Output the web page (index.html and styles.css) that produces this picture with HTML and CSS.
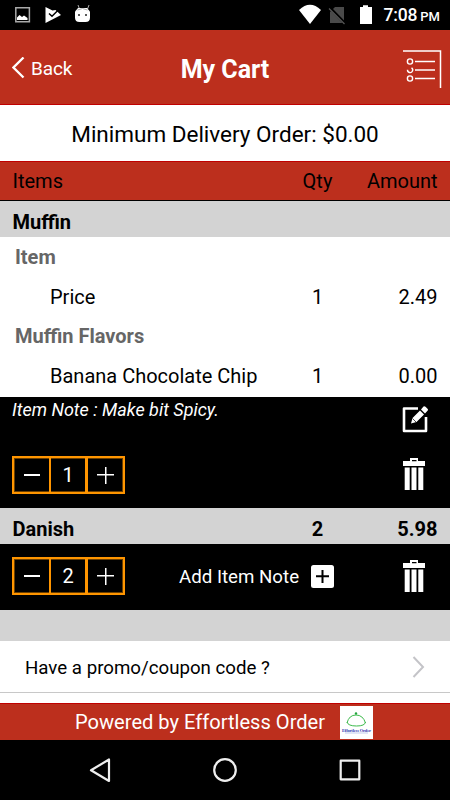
FILE: index.html
```html
<!DOCTYPE html>
<html lang="en">
<head>
<meta charset="utf-8">
<title>My Cart</title>
<link rel="stylesheet" href="styles.css">
</head>
<body>
<svg class="defs" width="0" height="0">
  <symbol id="trash" viewBox="0 0 22 32">
    <path fill="#fff" d="M0 3h7V0h8v3h7v5H0zM9 2v1.200h4.500V2zM1.700 9.500h5V32h-5zM8.500 9.500h5V32h-5zM15.300 9.500h5V32h-5z" fill-rule="evenodd"/>
  </symbol>
</svg>
<div class="screen">
  <div class="status">
    <svg class="left-icons" width="80" height="30" viewBox="0 0 80 30">
      <path d="M.8 7.800h13.600v14H.8z" fill="none" stroke="#aaa" stroke-width="1.500"/>
      <path d="M2 20v-2.500l2.500-2.500 2.500 2 2-1.500 3.500 2.500v2z" fill="#fff"/>
      <path d="M30.500 7l7 3.500 3-.5 5.500 5-15.500 8z" fill="#fff"/>
      <path d="M34 13.500l3 2.800 6.500-6.500" fill="none" stroke="#000" stroke-width="1.500"/>
      <path d="M63 5l1.500 4M74 5l-1.500 4" stroke="#aaa" stroke-width="1"/>
      <path d="M63 8h9l3 3.500v6q0 4.500-4.500 4.500h-6q-4.500 0-4.500-4.500v-6z" fill="#fff"/>
      <path d="M62.500 10q5-3 10 0" stroke="#aaa" fill="none"/>
      <circle cx="64" cy="15" r="1" fill="#222"/><circle cx="71" cy="15" r="1" fill="#222"/>
    </svg>
    <svg class="right-icons" width="76" height="30" viewBox="0 0 76 30">
      <path d="M0 10Q11-.5 22 10L11 24z" fill="#fff"/>
      <path d="M36 7h9v16H31V12z" fill="#4a4a4a"/>
      <path d="M31 8l15 15.500" stroke="#000" stroke-width="3"/>
      <path d="M30 8.500l15.500 15.500" stroke="#555" stroke-width="1.300"/>
      <path d="M61 7h3V5.300h5V7h4v17H61z" fill="#fff"/>
    </svg>
    <span class="clock">7:08 <small>PM</small></span>
  </div>
  <header class="header">
    <div class="back">
      <svg width="13" height="23" viewBox="0 0 13 23"><path d="M11.500 .5L1.500 10.500l10 10" fill="none" stroke="#fff" stroke-width="2.300"/></svg>
      <span>Back</span>
    </div>
    <h1>My Cart</h1>
    <svg class="list" width="39" height="40" viewBox="0 0 39 40">
      <g fill="none" stroke="#fff">
        <path d="M0 2h37.500v37" stroke-width="1.500"/>
        <circle cx="7" cy="12.500" r="2.600" stroke-width="1.400"/><path d="M8.500 18.800a2.600 2.600 0 1 1-4 2" stroke-width="1.400"/>
        <circle cx="7" cy="29.500" r="2.600" stroke-width="1.400"/>
        <path d="M12 12.500h20M12 21h20M12 29.500h20" stroke-width="1.500"/>
      </g>
    </svg>
  </header>
  <div class="minimum"><span>Minimum Delivery Order: $0.00</span></div>
  <div class="row columns"><span>Items</span><span class="qty">Qty</span><span class="amount">Amount</span></div>
  <div class="row product"><span>Muffin</span></div>
  <div class="options">
    <div class="group">Item</div>
    <div class="row option"><span>Price</span><span class="qty">1</span><span class="amount">2.49</span></div>
    <div class="group">Muffin Flavors</div>
    <div class="row option"><span>Banana Chocolate Chip</span><span class="qty">1</span><span class="amount">0.00</span></div>
  </div>
  <div class="controls noted">
    <div class="note">
      <em>Item Note : Make bit Spicy.</em>
      <svg class="edit" width="27" height="27" viewBox="0 0 27 27">
        <path d="M16 2.500H2v22.500h22V11" fill="none" stroke="#fff" stroke-width="2.600" stroke-linejoin="round"/>
        <path d="M9 17.500l1.500-5.500L18 4.500l4 4-7.500 7.500zM19 3.500L21.500.5q1-.7 2 .3l2 2q1 1 0 2L23 7.500z" fill="#fff"/>
        <path d="M10.500 12.500l3.500 3.500" stroke="#000" stroke-width=".7"/>
      </svg>
    </div>
    <div class="actions">
      <div class="stepper"><i class="minus"></i><b>1</b><i class="plus"></i></div>
      <svg class="trash" width="22" height="32"><use href="#trash"/></svg>
    </div>
  </div>
  <div class="row product"><span>Danish</span><span class="qty">2</span><span class="amount">5.98</span></div>
  <div class="controls short">
    <div class="actions">
      <div class="stepper"><i class="minus"></i><b>2</b><i class="plus"></i></div>
      <div class="add"><span>Add Item Note</span>
        <svg width="23" height="23" viewBox="0 0 23 23"><rect width="23" height="23" rx="2.500" fill="#fff"/><path d="M5 11.300h13M11.500 5v13" stroke="#000" stroke-width="2"/></svg>
      </div>
      <svg class="trash" width="22" height="32"><use href="#trash"/></svg>
    </div>
  </div>
  <div class="spacer"></div>
  <div class="promo"><span>Have a promo/coupon code ?</span>
    <svg width="13" height="22" viewBox="0 0 13 22"><path d="M1.500 1l9.500 10-9.500 10" fill="none" stroke="#c4c4c8" stroke-width="2"/></svg>
  </div>
  <footer class="powered"><span>Powered by Effortless Order</span>
    <svg width="33" height="33" viewBox="0 0 33 33">
      <path fill="#fff" d="M0 0h33v33H0z"/>
      <path d="M7 17Q9 9 16 9t9.500 8M7 16q1 4 9.500 4t9-4" fill="none" stroke="#3cba4b" stroke-width="1"/>
      <circle cx="16" cy="7.500" r="1.200" fill="#20a33a"/>
      <text x="16.500" y="25.500" text-anchor="middle" textLength="29" class="brand">Effortless Order</text>
      <path d="M5 27h23" stroke="#a9b8e4" stroke-width=".7"/>
    </svg>
  </footer>
  <nav class="nav">
    <svg width="450" height="60" viewBox="0 0 450 60" fill="none" stroke="#eee" stroke-width="2.200" stroke-linejoin="round">
      <path d="M91 30.300L109 19.500v21.500z"/><circle cx="225" cy="30" r="10.800"/><rect x="340.700" y="20.700" width="18.600" height="18.600"/>
    </svg>
  </nav>
</div>
</body>
</html>
```
FILE: styles.css
```css
* { box-sizing: border-box; }
body { margin: 0; background: #000; font-family: Roboto, "Liberation Sans", sans-serif; font-size: 20px; line-height: 24px; color: #000; }
svg { display: block; flex: none; }
.defs { position: absolute; }
.screen { width: 450px; height: 800px; display: flex; flex-direction: column; overflow: hidden; white-space: nowrap; }
.screen > * { flex: none; }
.status { height: 30px; background: #000; display: flex; align-items: center; padding: 0 10px 0 15px; color: #fff; }
.right-icons { margin-left: 204px; }
.clock { margin-left: auto; font-size: 17.5px; font-weight: 500; padding-top: 2px; letter-spacing: -.2px; }
.clock small { font-size: 13px; margin-left: -1px; letter-spacing: 0; }
.header { height: 75px; background: #bc2f1d; border-bottom: 1px solid #c00000; color: #fff; display: grid; grid-template-columns: 1fr auto 1fr; align-items: center; padding: 2px 8px 0 12px; }
.back { display: flex; align-items: center; gap: 6px; font-size: 19px; letter-spacing: -.1px; }
.back span { padding-top: 1px; }
.header h1 { margin: 0 4px 0 0; font-size: 25px; font-weight: 700; padding: 3px 0 0; }
.list { justify-self: end; margin-top: 1px; }
.minimum { height: 56px; background: #fff; font-size: 22.5px; display: flex; align-items: center; justify-content: center; padding-top: 2px; }
.row { display: grid; grid-template-columns: 1fr 60px 90px; align-items: center; padding: 0 12.5px 0 12px; }
.qty { text-align: center; }
.amount { text-align: right; }
.columns { height: 40px; background: #bc2f1d; border-top: 1px solid #c00000; border-bottom: 1px solid #000; padding-left: 12.5px; }
.product { height: 36px; background: #d3d3d3; font-weight: 700; padding-top: 5px; padding-left: 12.5px; }
.options { height: 160px; background: #fff; }
.group { height: 40px; display: flex; align-items: center; padding-left: 15px; font-weight: 700; color: #666; }
.option { height: 39px; padding-left: 50px; }
.controls { background: #000; color: #fff; padding: 0 12px; }
.noted { height: 111px; }
.short { height: 66px; padding-top: 13px; }
.note { height: 59px; display: flex; justify-content: space-between; font-size: 18px; }
.note em { padding-top: 1px; }
.edit { margin: 9px 9px 0 0; }
.actions { height: 38px; display: flex; align-items: center; }
.stepper { width: 113px; height: 38px; border: 2px solid #ff9500; box-shadow: inset 0 0 0 1px #6b3f00; display: grid; grid-template-columns: 35px 39px 35px; }
.stepper > * { display: grid; place-items: center; font-weight: 400; }
.stepper b { border: solid #ff9500; border-width: 0 3px 0 2px; }
.minus::before { content: ""; width: 16px; height: 2.5px; background: #fff; }
.plus { background: linear-gradient(#fff, #fff) center / 17px 1.5px no-repeat, linear-gradient(#fff, #fff) center / 1.5px 17px no-repeat; }
.trash { margin: -2px 13px 0 auto; }
.add { display: flex; align-items: center; gap: 12px; margin-left: 54px; font-size: 18.7px; }
.short .trash { margin-top: 0; }
.add span { padding-top: 2px; }
.spacer { height: 31px; background: #d3d3d3; }
.promo { height: 62px; background: linear-gradient(#c8c8c8, #c8c8c8) 0 51px / 100% 1px no-repeat #fff; display: flex; justify-content: space-between; align-items: center; padding: 0 25px 10px; font-size: 18.7px; }
.promo span { padding-top: 1px; }
.powered { height: 37px; background: #bc2f1d; border-top: 1px solid #c00000; color: #fff; display: flex; align-items: center; gap: 15px; padding-left: 75px; font-size: 20.1px; }
.brand { font: 700 4.5px "Liberation Serif", serif; fill: #3038b0; }
.nav { height: 60px; background: #000; }
```
